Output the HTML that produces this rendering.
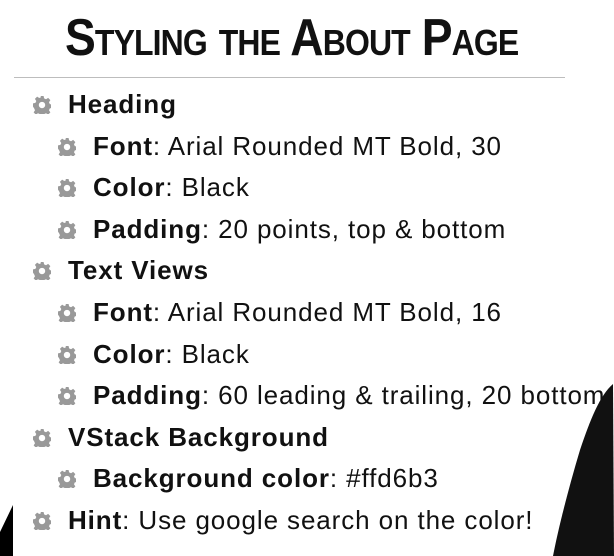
<!DOCTYPE html>
<html><head><meta charset="utf-8"><style>
body{margin:0;width:614px;height:556px;background:#fff;position:relative;overflow:hidden;font-family:"Liberation Sans",sans-serif;color:#111}
.title{position:absolute;left:65px;top:8px;font-size:52px;font-weight:bold;font-variant:small-caps;white-space:nowrap;transform-origin:0 0;letter-spacing:-1px}
.rule{position:absolute;left:14px;top:77px;width:551px;height:1px;background:#bdbdbd}
.row{position:absolute;font-size:26px;letter-spacing:0.9px;white-space:nowrap;line-height:30px}
.row b{font-weight:bold}
.g{position:absolute;width:18px;height:18px}
</style></head><body>
<div class="title" id="t">Styling the About Page</div>
<div class="rule"></div>
<svg width="0" height="0" style="position:absolute"><defs>
<g id="gear"><path fill="#999" fill-rule="evenodd" d="M7 0h3l.5 2.3 1.8.8 2-1.3 2.1 2.1-1.3 2 .8 1.8 2.3.5v3l-2.3.5-.8 1.8 1.3 2-2.1 2.1-2-1.3-1.8.8-.5 2.3h-3l-.5-2.3-1.8-.8-2 1.3-2.1-2.1 1.3-2-.8-1.8L0 10V7l2.3-.5.8-1.8-1.3-2 2.1-2.1 2 1.3 1.8-.8zM8.5 5.5a3 3 0 1 0 .01 0z"/></g>
</defs></svg>
<div id="list"></div>
<svg style="position:absolute;left:0;top:0" width="614" height="556">
<path d="M613 384 C600 395 590 420 580 450 C568 490 558 530 553 556 L614 556 Z" fill="#111"/>
<path d="M13 505 L13 556 L0 556 L0 532 Z" fill="#000"/>
</svg>
<script>
var rows=[
[0,'<b>Heading</b>'],
[1,'<b>Font</b>: Arial Rounded MT Bold, 30'],
[1,'<b>Color</b>: Black'],
[1,'<b>Padding</b>: 20 points, top &amp; bottom'],
[0,'<b>Text Views</b>'],
[1,'<b>Font</b>: Arial Rounded MT Bold, 16'],
[1,'<b>Color</b>: Black'],
[1,'<b>Padding</b>: 60 leading &amp; trailing, 20 bottom'],
[0,'<b>VStack Background</b>'],
[1,'<b>Background color</b>: #ffd6b3'],
[0,'<b>Hint</b>: Use google search on the color!']];
var h='';
rows.forEach(function(r,i){
 var cy=105+i*41.6;
 var gx=r[0]?58:33, tx=r[0]?93:68;
 h+='<svg class="g" style="left:'+gx+'px;top:'+(cy-9)+'px" viewBox="0 0 17 17"><use href="#gear"/></svg>';
 h+='<div class="row" style="left:'+tx+'px;top:'+(cy-16)+'px">'+r[1]+'</div>';
});
document.getElementById('list').innerHTML=h;
var t=document.getElementById('t');t.style.transform='scaleX('+(453/t.offsetWidth)+')';
</script>
</body></html>
